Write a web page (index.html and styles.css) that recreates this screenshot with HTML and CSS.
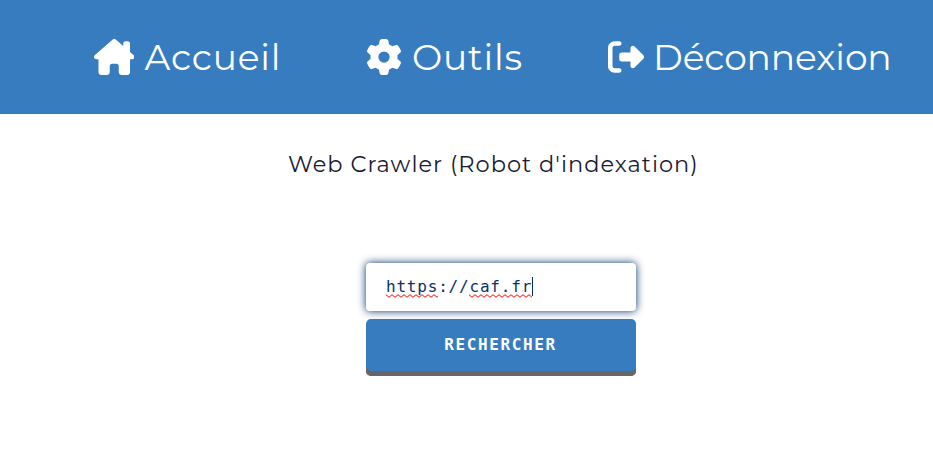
FILE: index.html
```html
<!DOCTYPE html>
<html lang="fr">
<head>
<meta charset="utf-8">
<title>Web Crawler</title>
<link rel="stylesheet" href="styles.css">
</head>
<body>
<nav class="nav">
  <a class="nav-item"><svg class="icon icon-house" viewBox="0 0 576 512"><path d="M575.8 255.5c0 18-15 32.1-32 32.1h-32l.7 160.2V472c0 22.1-17.9 40-40 40H392c-22.1 0-40-17.9-40-40V384c0-17.7-14.3-32-32-32H256c-17.7 0-32 14.3-32 32v88c0 22.1-17.9 40-40 40H104c-22.1 0-40-17.9-40-40V287.6H32c-18 0-32-14-32-32.1c0-9 3-17 10-24L266.4 8c7-7 15-8 22-8s15 2 21 7L416 100V64c0-17.7 14.3-32 32-32h32c17.7 0 32 14.3 32 32v121l52.8 46.5c8 7 12 15 11 24z"/></svg><span class="label">Accueil</span></a>
  <a class="nav-item"><svg class="icon" viewBox="0 0 512 512"><path d="M495.9 166.6c3.2 8.7 .5 18.4-6.4 24.6l-43.3 39.4c1.1 8.3 1.7 16.8 1.7 25.4s-.6 17.1-1.7 25.4l43.3 39.4c6.9 6.2 9.6 15.9 6.4 24.6c-4.4 11.9-9.7 23.3-15.8 34.3l-4.7 8.1c-6.6 11-14 21.4-22.1 31.2c-5.9 7.2-15.7 9.6-24.5 6.8l-55.7-17.7c-13.4 10.3-28.2 18.9-44 25.4l-12.5 57.1c-2 9.1-9 16.3-18.2 17.8c-13.8 2.3-28 3.5-42.5 3.5s-28.7-1.2-42.5-3.5c-9.2-1.5-16.2-8.7-18.2-17.8l-12.5-57.1c-15.8-6.5-30.6-15.1-44-25.4L83.1 425.9c-8.8 2.8-18.6 .3-24.5-6.8c-8.1-9.8-15.5-20.2-22.1-31.2l-4.7-8.1c-6.1-11-11.4-22.4-15.8-34.3c-3.2-8.7-.5-18.4 6.4-24.6l43.3-39.4C64.6 273.1 64 264.6 64 256s.6-17.1 1.7-25.4L22.4 191.2c-6.9-6.2-9.6-15.9-6.4-24.6c4.4-11.9 9.7-23.3 15.8-34.3l4.7-8.1c6.6-11 14-21.4 22.1-31.2c5.9-7.2 15.7-9.6 24.5-6.8l55.7 17.7c13.4-10.3 28.2-18.9 44-25.4l12.5-57.1c2-9.1 9-16.3 18.2-17.8C227.3 1.2 241.5 0 256 0s28.7 1.2 42.5 3.5c9.2 1.5 16.2 8.7 18.2 17.8l12.5 57.1c15.8 6.5 30.6 15.1 44 25.4l55.7-17.7c8.8-2.8 18.6-.3 24.5 6.8c8.1 9.8 15.5 20.2 22.1 31.2l4.7 8.1c6.1 11 11.4 22.4 15.8 34.3zM256 336a80 80 0 1 0 0-160 80 80 0 1 0 0 160z"/></svg><span class="label">Outils</span></a>
  <a class="nav-item"><svg class="icon" viewBox="0 0 512 512"><path d="M377.9 105.9L500.7 228.7c7.2 7.2 11.3 17.1 11.3 27.3s-4.1 20.1-11.3 27.3L377.9 406.1c-6.4 6.4-15 9.9-24 9.9c-18.7 0-33.9-15.2-33.9-33.9V320H192c-17.7 0-32-14.3-32-32v-64c0-17.7 14.3-32 32-32h128v-62.1c0-18.7 15.2-33.9 33.9-33.9c9 0 17.6 3.6 24 9.9zM160 96H96c-17.7 0-32 14.3-32 32v256c0 17.7 14.3 32 32 32h64c17.7 0 32 14.3 32 32s-14.3 32-32 32H96c-53 0-96-43-96-96V128C0 75 43 32 96 32h64c17.7 0 32 14.3 32 32s-14.3 32-32 32z"/></svg><span class="label label-logout">Déconnexion</span></a>
</nav>
<main class="main">
  <h1 class="title">Web Crawler (Robot d'indexation)</h1>
  <form class="form">
    <div class="field"><span class="misspelt">https</span>://<span class="misspelt">caf.fr</span><span class="caret"></span></div>
    <button class="submit" type="button">RECHERCHER</button>
  </form>
</main>
</body>
</html>
```
FILE: styles.css
```css
body {
  margin: 0;
  background: #fff;
  font-family: Montserrat, Inter, sans-serif;
  overflow: hidden;
}
.nav {
  display: grid;
  grid-template-columns: 272px 242px auto;
  align-items: center;
  box-sizing: border-box;
  height: 114px;
  padding: 0 0 1px 93.5px;
  background: #367cbf;
}
.nav-item {
  display: flex;
  align-items: center;
  gap: 10.5px;
  color: #fff;
  font-size: 36px;
  font-weight: 400;
  line-height: 44px;
  white-space: nowrap;
}
.icon {
  flex: none;
  width: 36px;
  height: 36px;
  fill: #fff;
}
.icon-house {
  width: 40.5px;
}
.label {
  padding-top: 1px;
  letter-spacing: 0.8px;
}
.label-logout {
  margin-left: -1px;
  letter-spacing: -0.1px;
}
.main {
  display: flex;
  flex-direction: column;
}
.title {
  margin: 35px 0 0 288px;
  color: #1b1b32;
  font-size: 22.5px;
  font-weight: 400;
  letter-spacing: 1px;
  line-height: 30px;
  white-space: nowrap;
}
.form {
  display: flex;
  flex-direction: column;
  gap: 8px;
  width: 270px;
  margin: 84px 0 0 366px;
}
.field {
  display: flex;
  align-items: center;
  box-sizing: border-box;
  height: 48px;
  padding: 0 20px 1px;
  border-radius: 4px;
  background: #fff;
  box-shadow: 0 0 8px #002f66;
  color: #0a3265;
  font: 16px/19px "DejaVu Sans Mono", monospace;
  letter-spacing: 0.8px;
}
.misspelt {
  padding-bottom: 4px;
  margin-bottom: -4px;
  background: url("data:image/svg+xml,%3Csvg xmlns='http://www.w3.org/2000/svg' width='6' height='4'%3E%3Cpath d='M-1.5 2L0 .7L3 3.3L6 .7L7.500 2' fill='none' stroke='%23ff0000' stroke-width='1'/%3E%3C/svg%3E") repeat-x 0 17px;
}
.caret {
  width: 1px;
  height: 19px;
  background: #002f66;
}
.submit {
  height: 57px;
  padding: 0 1px 6px 0;
  border: 0;
  border-radius: 5px;
  background: #367cbf;
  box-shadow: inset 0 -5px #666;
  color: #fff;
  font: bold 16px/19px "DejaVu Sans Mono", monospace;
  letter-spacing: 1.6px;
}
```
